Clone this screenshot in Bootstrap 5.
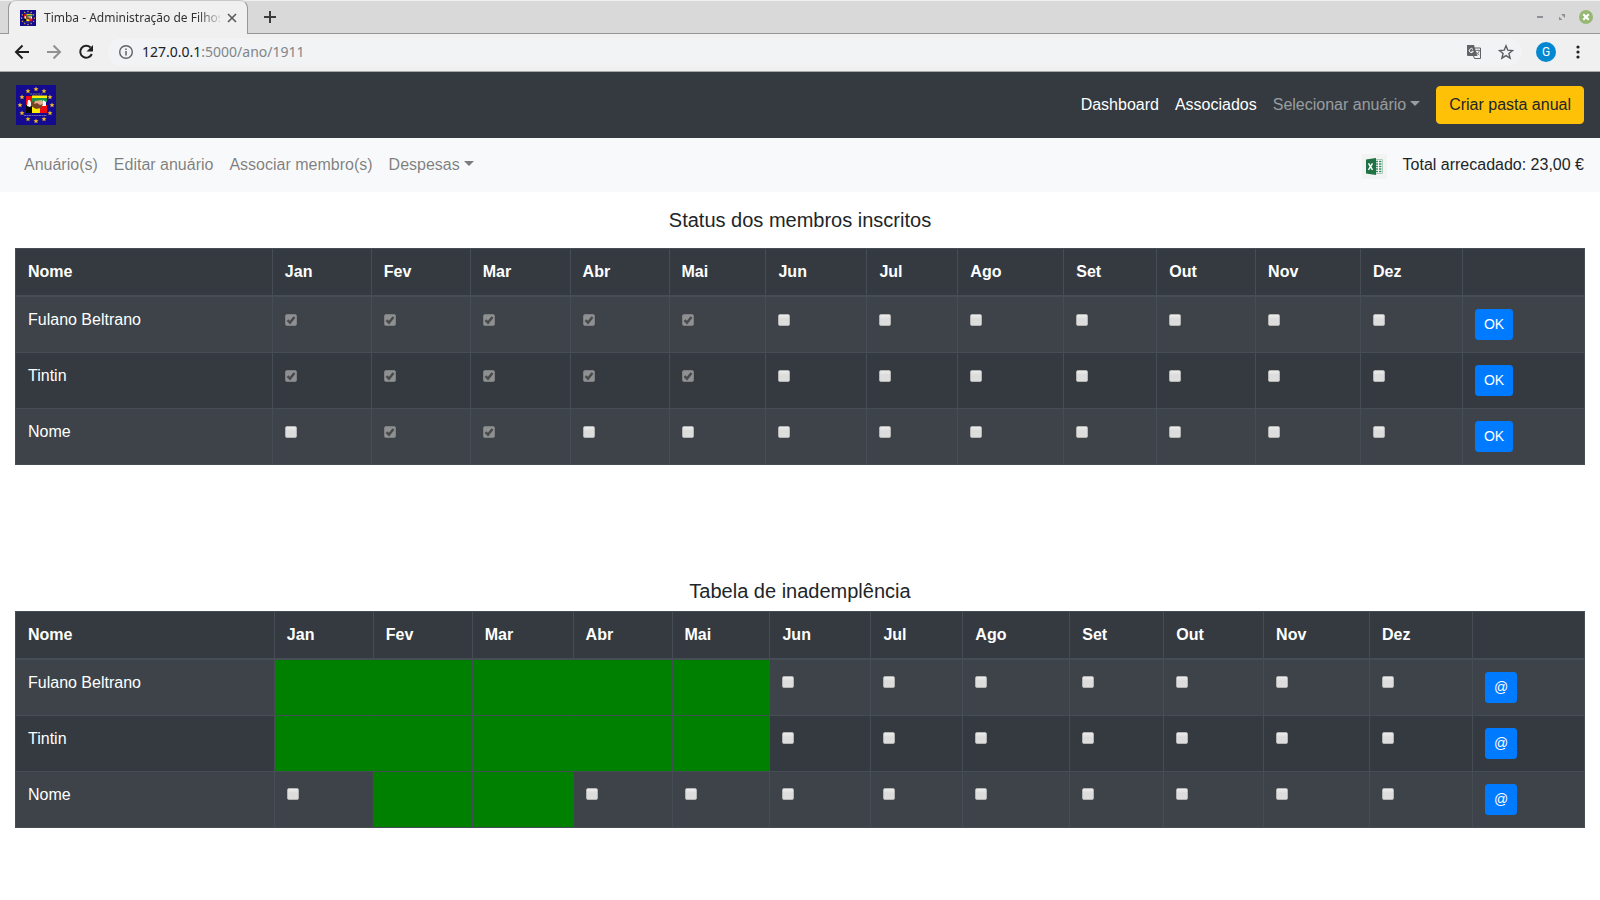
<!DOCTYPE html>
<html lang="pt">
<head>
<meta charset="utf-8">
<meta name="viewport" content="width=device-width, initial-scale=1">
<title>Timba - Administração de Filhos</title>
<link rel="stylesheet" href="https://cdn.jsdelivr.net/npm/bootstrap@5.3.0/dist/css/bootstrap.min.css">
<style>
  body { font-family: "Liberation Sans", Arial, sans-serif; color: #212529; background: #fff; }
  svg { display: block; flex: none; }

  /* browser frame */
  .chrome-ui { font-family: "Noto Sans", sans-serif; }
  .chrome-ui button { border: 0; background: none; padding: 0; }
  .tab-strip { height: 34px; background: #d9d9d9; border-top: 1px solid #efefef; box-shadow: inset 0 -1px #969696; padding: 0 0 1px 8px; }
  .page-tab { width: 240px; height: 34px; background: #f0f0f0; border: 1px solid #969696; border-bottom: 0; border-top-color: #c8c8c8; border-radius: 8px 8px 0 0; padding: 0 10px 0 11px; }
  .tab-title { font-size: 12px; line-height: 32px; color: #333; width: 176px; white-space: nowrap; overflow: hidden; -webkit-mask-image: linear-gradient(to right, #000 154px, transparent 180px); mask-image: linear-gradient(to right, #000 154px, transparent 180px); }
  .window-controls { gap: 13px; padding: 0 7px 1px 0; }
  .tool-row { height: 38px; background: #f0f0f0; border-bottom: 1px solid #a8a8a8; padding: 0 20px 2px 12px; }
  .omnibox { height: 28px; border-radius: 14px; background: #f1f3f4; padding: 0 8px 0 11px; }
  .url-text { font-size: 14px; line-height: 28px; color: #80868b; margin-left: 9px; }
  .url-text b { font-weight: 400; color: #202124; }
  .profile-area { gap: 20px; padding-left: 14px; }
  .avatar { width: 20px; height: 20px; background: #0288d1 !important; color: #fff; font: 12px/20px Roboto, sans-serif; }

  /* application bars */
  .main-bar { background: #343a40; padding: 8px 16px; }
  .main-bar .navbar-brand { padding: 5px 0; margin: 0; }
  .main-bar .nav-link { color: #fff; padding: 8px; }
  .main-bar .nav-link.dropdown-toggle { color: rgba(255,255,255,.5); }
  .nav-link.dropdown-toggle::after { border-width: 5px 5px 0; margin-left: 4px; vertical-align: 4px; }
  .btn-annual { background: #ffc107; color: #212529; border-color: #ffc107; border-radius: 4px; padding: 6px 12px; }
  .sub-bar { background: #f8f9fa; padding: 7px 16px; }
  .sub-bar .nav-link { color: rgba(0,0,0,.5); padding: 8px; }
  .excel-link { background: #f3f3f3; margin-top: 2px; }

  /* tables */
  .page-body { padding: 16px 15px; }
  .section-title { font-size: 20px; line-height: 24px; font-weight: 400; text-align: center; }
  .months { --bs-table-color: #fff; --bs-table-bg: #343a40; --bs-table-border-color: #454d55; --bs-table-striped-bg: #3e4349; --bs-table-striped-color: #fff; margin: 0; color: #fff; table-layout: fixed; }
  .months th, .months td { padding: 12px; vertical-align: top; }
  .months thead th, .months .member-name { padding: 11px 12px; }
  .months thead th { border-bottom: 2px solid #454d55; }
  .months > tbody > tr > .paid { background: green; box-shadow: none; }
  .months input { appearance: none; display: block; width: 12px; height: 12px; margin: 5px 0 0; border: 1px solid #b4b4b4; border-radius: 2px; background: linear-gradient(#ededed, #dcdcdc 40%, #dedede); }
  .months input:disabled { border-color: #7d7f81; background: #8f9092 url("data:image/svg+xml,%3Csvg xmlns='http://www.w3.org/2000/svg' viewBox='0 0 10 10'%3E%3Cpath d='M1.500 5.200 4 7.600 8.500 2' fill='none' stroke='%23484a4c' stroke-width='2.500'/%3E%3C/svg%3E") center/10px no-repeat; }
  .overdue input { margin-top: 4px; }
  .btn-row { background: #007bff; border: 1px solid #007bff; color: #fff; font-size: 14px; line-height: 21px; padding: 4px 8px; border-radius: 3px; }
  .overdue-block { margin-top: 114px; }
</style>
</head>
<body>
<svg width="0" height="0" class="position-absolute" aria-hidden="true">
  <defs>
    <path id="star5" fill="#f0c020" d="M0-2.500.7-.8 2.500-.7 1.100.4 1.600 2.200 0 1.200-1.600 2.200-1.100.4-2.500-.7-.7-.8Z"/>
    <symbol id="emblem" viewBox="0 0 40 40">
      <rect width="40" height="40" fill="#130a8f"/>
      <g>
        <use href="#star5" x="20" y="4"/><use href="#star5" x="28" y="6"/><use href="#star5" x="34" y="12"/>
        <use href="#star5" x="36" y="20"/><use href="#star5" x="34" y="28"/><use href="#star5" x="28" y="34"/>
        <use href="#star5" x="20" y="36"/><use href="#star5" x="12" y="34"/><use href="#star5" x="6" y="28"/>
        <use href="#star5" x="4" y="20"/><use href="#star5" x="6" y="12"/><use href="#star5" x="12" y="6"/>
      </g>
      <path d="M14 9h12" stroke="#77705e" stroke-dasharray="2 .7"/>
      <path fill="#f00a10" d="M10 11h7v10h-7z"/>
      <path fill="#ffee00" d="M16 10.500h15v3H16z"/><path fill="#169447" d="M16 13h15v4H16z"/>
      <path fill="#050505" d="M10 20h6v8h-6z"/><path fill="#ffee00" d="M16 20h8v8h-8z"/><path fill="#f00a10" d="M24 20h7v8h-7z"/>
      <path fill="#f8f8f8" d="m12 15 2 0 2 5-2 2-3-1zM27 15l3 2v4h-5z"/>
      <path fill="#784426" d="m15 17 5-1 7 3-2 4-5 1-5-3z"/><path fill="#e4b08a" d="m19 16 7-1 1 4-3 1-3-2-3 1z"/>
      <path d="M8 30.500h23" stroke="#6d68b3" stroke-dasharray="2 .5"/>
    </symbol>
  </defs>
</svg>

<header class="chrome-ui">
  <div class="tab-strip d-flex align-items-center">
    <div class="page-tab d-flex align-items-center">
      <svg width="16" height="16" class="me-2"><use href="#emblem"/></svg>
      <div class="tab-title">Timba - Administração de Filhos</div>
      <button type="button" class="ms-auto" aria-label="Fechar separador"><svg width="10" height="10" viewBox="0 0 10 10"><path d="m1 1 8 8M9 1 1 9" stroke="#5a5a5a" stroke-width="1.600"/></svg></button>
    </div>
    <button type="button" class="ms-3" aria-label="Novo separador"><svg width="12" height="12" viewBox="0 0 12 12"><path d="M6 0v12M0 6h12" stroke="#3c3c3c" stroke-width="2"/></svg></button>
    <div class="window-controls ms-auto d-flex align-items-center">
      <button type="button" aria-label="Minimizar"><svg width="10" height="8" viewBox="0 0 10 8"><path d="M2 4h6" stroke="#8d9096" stroke-width="2"/></svg></button>
      <button type="button" aria-label="Restaurar"><svg width="8" height="8" viewBox="0 0 8 8"><path fill="#8d9096" d="M3 1h4v4L5.500 3.500zM1 3.500 4.500 7H1z"/></svg></button>
      <button type="button" aria-label="Fechar janela"><svg width="14" height="14" viewBox="0 0 14 14"><circle cx="7" cy="7" r="7" fill="#96b873"/><path d="m4.300 4.300 5.400 5.400m0-5.400-5.400 5.400" stroke="#fff" stroke-width="2.200"/></svg></button>
    </div>
  </div>
  <div class="tool-row d-flex align-items-center">
    <div class="d-flex gap-2 pe-2">
      <button type="button" aria-label="Voltar"><svg width="24" height="20" viewBox="0 0 24 20"><path d="M17 10H4m6.500-6.500L4 10l6.500 6.500" fill="none" stroke="#202020" stroke-width="2"/></svg></button>
      <button type="button" aria-label="Avançar"><svg width="24" height="20" viewBox="0 0 24 20"><path d="M3 10h13M9.500 3.500 16 10l-6.500 6.500" fill="none" stroke="#919191" stroke-width="2"/></svg></button>
      <button type="button" aria-label="Recarregar"><svg width="24" height="20" viewBox="0 0 24 20"><path d="M14.500 5.500A6 6 0 1 0 15.800 12" fill="none" stroke="#202020" stroke-width="2"/><path fill="#202020" d="M17 3v6.500h-6.500z"/></svg></button>
    </div>
    <div class="omnibox d-flex align-items-center flex-grow-1">
      <svg width="14" height="14" viewBox="0 0 14 14"><circle cx="7" cy="7" r="6.300" fill="none" stroke="#5f6368" stroke-width="1.400"/><path d="M7 6v4.500M7 3.500V5" stroke="#5f6368" stroke-width="1.500"/></svg>
      <div class="url-text"><b>127.0.0.1</b>:5000/ano/1911</div>
      <div class="ms-auto d-flex align-items-center gap-3">
        <button type="button" aria-label="Traduzir"><svg width="16" height="16" viewBox="0 0 16 16"><path fill="#606367" d="M1 1h7l3.500 11H2a1 1 0 0 1-1-1z"/><path d="M9 4h5.500v10.500H8.500L7.500 12" fill="none" stroke="#606367"/><path d="M7 5.500a2 2 0 1 0 .2 1.800H5.500" fill="none" stroke="#fff"/><path d="M9.500 6.500H14m-2-1v1m1.300 0c-.3 2-1.500 3.500-3 4.500m0-3c.8 1.500 1.800 2.300 3 3" fill="none" stroke="#777" stroke-width=".900"/></svg></button>
        <button type="button" aria-label="Favorito"><svg width="16" height="16" viewBox="0 0 16 16"><path d="m8 1.800 1.800 4.400 4.700.3-3.600 3 1.200 4.700L8 11.600l-4.100 2.600 1.200-4.700-3.600-3 4.700-.3z" fill="none" stroke="#5a5d61" stroke-width="1.400"/></svg></button>
      </div>
    </div>
    <div class="profile-area d-flex align-items-center">
      <button type="button" class="avatar rounded-circle text-center" aria-label="Perfil G">G</button>
      <button type="button" aria-label="Menu"><svg width="4" height="14" viewBox="0 0 4 14"><g fill="#222"><circle cx="2" cy="2" r="1.600"/><circle cx="2" cy="7" r="1.600"/><circle cx="2" cy="12" r="1.600"/></g></svg></button>
    </div>
  </div>
</header>

<nav class="main-bar navbar navbar-expand" aria-label="Principal">
  <a class="navbar-brand" href="#" aria-label="Timba"><svg width="40" height="40"><use href="#emblem"/></svg></a>
  <ul class="navbar-nav ms-auto me-2">
    <li class="nav-item"><a class="nav-link" href="#">Dashboard</a></li>
    <li class="nav-item"><a class="nav-link" href="#">Associados</a></li>
    <li class="nav-item dropdown"><a class="nav-link dropdown-toggle" href="#" role="button" data-bs-toggle="dropdown">Selecionar anuário</a></li>
  </ul>
  <button type="button" class="btn btn-annual">Criar pasta anual</button>
</nav>

<nav class="sub-bar navbar navbar-expand" aria-label="Anuário">
  <ul class="navbar-nav">
    <li class="nav-item"><a class="nav-link" href="#">Anuário(s)</a></li>
    <li class="nav-item"><a class="nav-link" href="#">Editar anuário</a></li>
    <li class="nav-item"><a class="nav-link" href="#">Associar membro(s)</a></li>
    <li class="nav-item dropdown"><a class="nav-link dropdown-toggle" href="#" role="button" data-bs-toggle="dropdown">Despesas</a></li>
  </ul>
  <div class="ms-auto d-flex align-items-center gap-3">
    <a href="#" class="excel-link" aria-label="Exportar para Excel"><svg width="25" height="25" viewBox="0 0 25 25"><path fill="#fff" stroke="#a9cfba" d="M13 5.500h7.500v14H13z"/><path stroke="#3f8c62" stroke-width="1.500" d="M14 7.500h2m1 0h2.500M14 10h2m1 0h2.500M14 12.500h2m1 0h2.500M14 15h2m1 0h2.500M14 17.500h2m1 0h2.500"/><path fill="#207245" d="M4 5.500 14 4v17L4 19.500z"/><path d="m6.500 9.300 4 6.500m0-6.500-4 6.500" stroke="#fff" stroke-width="1.500"/></svg></a>
    <span>Total arrecadado: 23,00 €</span>
  </div>
</nav>

<main class="page-body">
  <section>
    <h2 class="section-title mb-3">Status dos membros inscritos</h2>
    <table class="months table table-striped table-bordered" data-mode="status"></table>
  </section>
  <section class="overdue-block">
    <h2 class="section-title mb-2">Tabela de inademplência</h2>
    <table class="months overdue table table-striped table-bordered" data-mode="overdue"></table>
  </section>
</main>

<script src="https://cdn.jsdelivr.net/npm/bootstrap@5.3.0/dist/js/bootstrap.bundle.min.js"></script>
<script>
  const months = ['Jan','Fev','Mar','Abr','Mai','Jun','Jul','Ago','Set','Out','Nov','Dez'];
  const members = [
    { name: 'Fulano Beltrano', paid: ['Jan','Fev','Mar','Abr','Mai'] },
    { name: 'Tintin', paid: ['Jan','Fev','Mar','Abr','Mai'] },
    { name: 'Nome', paid: ['Fev','Mar'] }
  ];
  /* relative column widths: name, twelve months, action */
  const weights = {
    status: [257, 99, 99, 100, 99, 97, 101, 91, 106, 93, 99, 105, 102, 122],
    overdue: [259, 99, 99, 101, 99, 98, 101, 92, 107, 94, 100, 106, 103, 112]
  };
  document.querySelectorAll('table.months').forEach(table => {
    const overdue = table.dataset.mode === 'overdue';
    const shares = weights[table.dataset.mode];
    const total = shares.reduce((a, b) => a + b);
    const cell = (member, month) => {
      const paid = member.paid.includes(month);
      if (overdue && paid) return '<td class="paid"></td>';
      return `<td><input type="checkbox" aria-label="${member.name}, ${month}"${paid ? ' checked disabled' : ''}></td>`;
    };
    table.innerHTML =
      `<colgroup>${shares.map(s => `<col style="width:${s / total * 100}%">`).join('')}</colgroup>` +
      `<thead><tr><th scope="col">Nome</th>${months.map(m => `<th scope="col">${m}</th>`).join('')}<th></th></tr></thead>` +
      `<tbody>${members.map(p => `<tr><td class="member-name">${p.name}</td>${months.map(m => cell(p, m)).join('')}` +
      `<td><button type="button" class="btn btn-row">${overdue ? '@' : 'OK'}</button></td></tr>`).join('')}</tbody>`;
  });
</script>
</body>
</html>
